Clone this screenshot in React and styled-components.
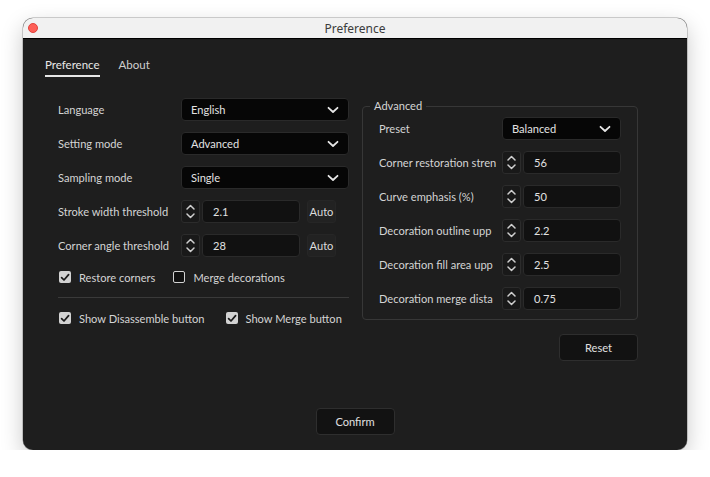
import React from "react";
import styled, { createGlobalStyle } from "styled-components";

const Global = createGlobalStyle`
  html, body { margin: 0; padding: 0; background: #ffffff; }
  body { font-family: "Lato", "Noto Sans", sans-serif; }
  * { box-sizing: border-box; }
`;

const FS = "11.1px";

const Page = styled.div`
  padding: 18px 0 0 23px;
`;

const Window = styled.div`
  width: 664px;
  height: 432px;
  border-radius: 10px;
  overflow: hidden;
  background: #1e1e1e;
  display: flex;
  flex-direction: column;
  box-shadow: 0 0 0 0.5px rgba(0,0,0,0.35), 0 8px 22px rgba(0,0,0,0.22);
`;

const TitleBar = styled.div`
  height: 21px;
  flex: none;
  background: #f1f1f1;
  border-bottom: 1px solid #000;
  display: flex;
  align-items: center;
  justify-content: center;
  position: relative;
  font-family: "Noto Sans", "Lato", sans-serif;
  font-size: 12px;
  color: #3c3c3c;
`;

const CloseDot = styled.span`
  position: absolute;
  left: 5px;
  top: 5px;
  width: 10px;
  height: 10px;
  border-radius: 50%;
  background: #fe5f57;
  border: 0.5px solid #e0443e;
`;

const Body = styled.div`
  flex: 1;
  display: flex;
  flex-direction: column;
  padding: 18px 0 15px;
`;

const Tabs = styled.div`
  display: flex;
  gap: 19px;
  padding-left: 22px;
`;

const Tab = styled.div`
  font-size: 11.5px;
  line-height: 16px;
  color: ${(p) => (p.$active ? "#e8e8e8" : "#cfcfcf")};
  padding-bottom: 2px;
  border-bottom: 2px solid ${(p) => (p.$active ? "#e6e6e6" : "transparent")};
`;

const Main = styled.div`
  display: flex;
  gap: 14px;
  padding-left: 35px;
  margin-top: 21px;
`;

const LeftCol = styled.div`
  width: 291px;
  display: flex;
  flex-direction: column;
  gap: 11px;
`;

const RightCol = styled.div`
  width: 275px;
  display: flex;
  flex-direction: column;
  align-items: flex-end;
  gap: 14px;
`;

const Row = styled.div`
  display: grid;
  grid-template-columns: 123px 1fr;
  align-items: center;
  height: 23px;
`;

const Label = styled.div`
  font-size: ${FS};
  color: #d4d4d4;
  white-space: nowrap;
  overflow: hidden;
`;

const Select = styled.div`
  height: 23px;
  background: #060606;
  border: 1px solid #2a2a2a;
  border-radius: 4px;
  display: flex;
  align-items: center;
  justify-content: space-between;
  padding: 0 9px 0 9px;
  font-size: ${FS};
  color: #e2e2e2;
`;

const NumberGroup = styled.div`
  display: flex;
  align-items: center;
  gap: 2px;
`;

const Spinner = styled.div`
  width: 19px;
  height: 23px;
  background: #191919;
  border: 1px solid #2c2c2c;
  border-radius: 3px;
  display: flex;
  align-items: center;
  justify-content: center;
`;

const NumInput = styled.div`
  width: 98px;
  height: 23px;
  background: #111111;
  border: 1px solid #2a2a2a;
  border-radius: 4px;
  display: flex;
  align-items: center;
  padding-left: 10px;
  font-size: ${FS};
  color: #e2e2e2;
`;

const AutoBtn = styled.div`
  margin-left: 5px;
  width: 29px;
  height: 23px;
  background: #222222;
  border: 1px solid #262626;
  border-radius: 3px;
  display: flex;
  align-items: center;
  justify-content: center;
  font-size: ${FS};
  color: #dcdcdc;
`;

const CheckRow = styled.div`
  display: flex;
  align-items: center;
  height: 18px;
  gap: ${(p) => p.$gap}px;
`;

const CheckItem = styled.label`
  display: flex;
  align-items: center;
  gap: 8px;
  font-size: ${FS};
  color: #d4d4d4;
  white-space: nowrap;
`;

const Box = styled.span`
  width: 12px;
  height: 12px;
  border-radius: 2px;
  display: flex;
  align-items: center;
  justify-content: center;
  background: ${(p) => (p.$checked ? "#d2d2d2" : "#111")};
  border: ${(p) => (p.$checked ? "none" : "1.5px solid #d2d2d2")};
  margin-left: 1px;
`;

const Divider = styled.div`
  height: 1px;
  background: #3a3a3a;
`;

const Fieldset = styled.fieldset`
  width: 275px;
  margin: 1px 0 0 0;
  padding: 0 16px 9px 16px;
  border: 1px solid #373737;
  border-radius: 4px;
  display: flex;
  flex-direction: column;
  gap: 11px;
`;

const Legend = styled.legend`
  font-size: ${FS};
  color: #d4d4d4;
  padding: 0 4px;
  margin-left: -9px;
  line-height: 14px;
  margin-bottom: 4px;
`;

const Button = styled.div`
  width: 79px;
  height: 27px;
  background: #121212;
  border: 1px solid #2e2e2e;
  border-radius: 4px;
  display: flex;
  align-items: center;
  justify-content: center;
  font-size: ${FS};
  color: #e0e0e0;
`;

const Footer = styled.div`
  margin-top: auto;
  display: flex;
  justify-content: center;
`;

const Chevron = () => (
  <svg width="12" height="8" viewBox="0 0 12 8">
    <path d="M1.5 1.8 L6 6 L10.5 1.8" fill="none" stroke="#e6e6e6" strokeWidth="1.8" strokeLinecap="round" strokeLinejoin="round" />
  </svg>
);

const SpinIcon = () => (
  <svg width="11" height="17" viewBox="0 0 11 17">
    <path d="M2 6 L5.5 2.5 L9 6" fill="none" stroke="#cfcfcf" strokeWidth="1.5" strokeLinecap="round" strokeLinejoin="round" />
    <path d="M2 11 L5.5 14.5 L9 11" fill="none" stroke="#cfcfcf" strokeWidth="1.5" strokeLinecap="round" strokeLinejoin="round" />
  </svg>
);

const Check = () => (
  <svg width="10" height="9" viewBox="0 0 10 9">
    <path d="M1.6 4.6 L4 7 L8.6 1.6" fill="none" stroke="#1a1a1a" strokeWidth="1.7" strokeLinecap="round" strokeLinejoin="round" />
  </svg>
);

const SelectRow = ({ label, value }) => (
  <Row>
    <Label>{label}</Label>
    <Select>
      <span>{value}</span>
      <Chevron />
    </Select>
  </Row>
);

const NumberRow = ({ label, value, auto }) => (
  <Row>
    <Label>{label}</Label>
    <NumberGroup>
      <Spinner>
        <SpinIcon />
      </Spinner>
      <NumInput>{value}</NumInput>
      {auto && <AutoBtn>Auto</AutoBtn>}
    </NumberGroup>
  </Row>
);

const CheckBox = ({ checked, label }) => (
  <CheckItem>
    <Box $checked={checked}>{checked && <Check />}</Box>
    {label}
  </CheckItem>
);

const advanced = [
  ["Corner restoration stren", "56"],
  ["Curve emphasis (%)", "50"],
  ["Decoration outline upp", "2.2"],
  ["Decoration fill area upp", "2.5"],
  ["Decoration merge dista", "0.75"],
];

export default function App() {
  return (
    <>
      <Global />
      <Page>
        <Window>
          <TitleBar>
            <CloseDot />
            Preference
          </TitleBar>
          <Body>
            <Tabs>
              <Tab $active>Preference</Tab>
              <Tab>About</Tab>
            </Tabs>
            <Main>
              <LeftCol>
                <SelectRow label="Language" value="English" />
                <SelectRow label="Setting mode" value="Advanced" />
                <SelectRow label="Sampling mode" value="Single" />
                <NumberRow label="Stroke width threshold" value="2.1" auto />
                <NumberRow label="Corner angle threshold" value="28" auto />
                <CheckRow $gap={17}>
                  <CheckBox checked label="Restore corners" />
                  <CheckBox label="Merge decorations" />
                </CheckRow>
                <Divider />
                <CheckRow $gap={20}>
                  <CheckBox checked label="Show Disassemble button" />
                  <CheckBox checked label="Show Merge button" />
                </CheckRow>
              </LeftCol>
              <RightCol>
                <Fieldset>
                  <Legend>Advanced</Legend>
                  <SelectRow label="Preset" value="Balanced" />
                  {advanced.map(([l, v]) => (
                    <NumberRow key={l} label={l} value={v} />
                  ))}
                </Fieldset>
                <Button>Reset</Button>
              </RightCol>
            </Main>
            <Footer>
              <Button>Confirm</Button>
            </Footer>
          </Body>
        </Window>
      </Page>
    </>
  );
}
